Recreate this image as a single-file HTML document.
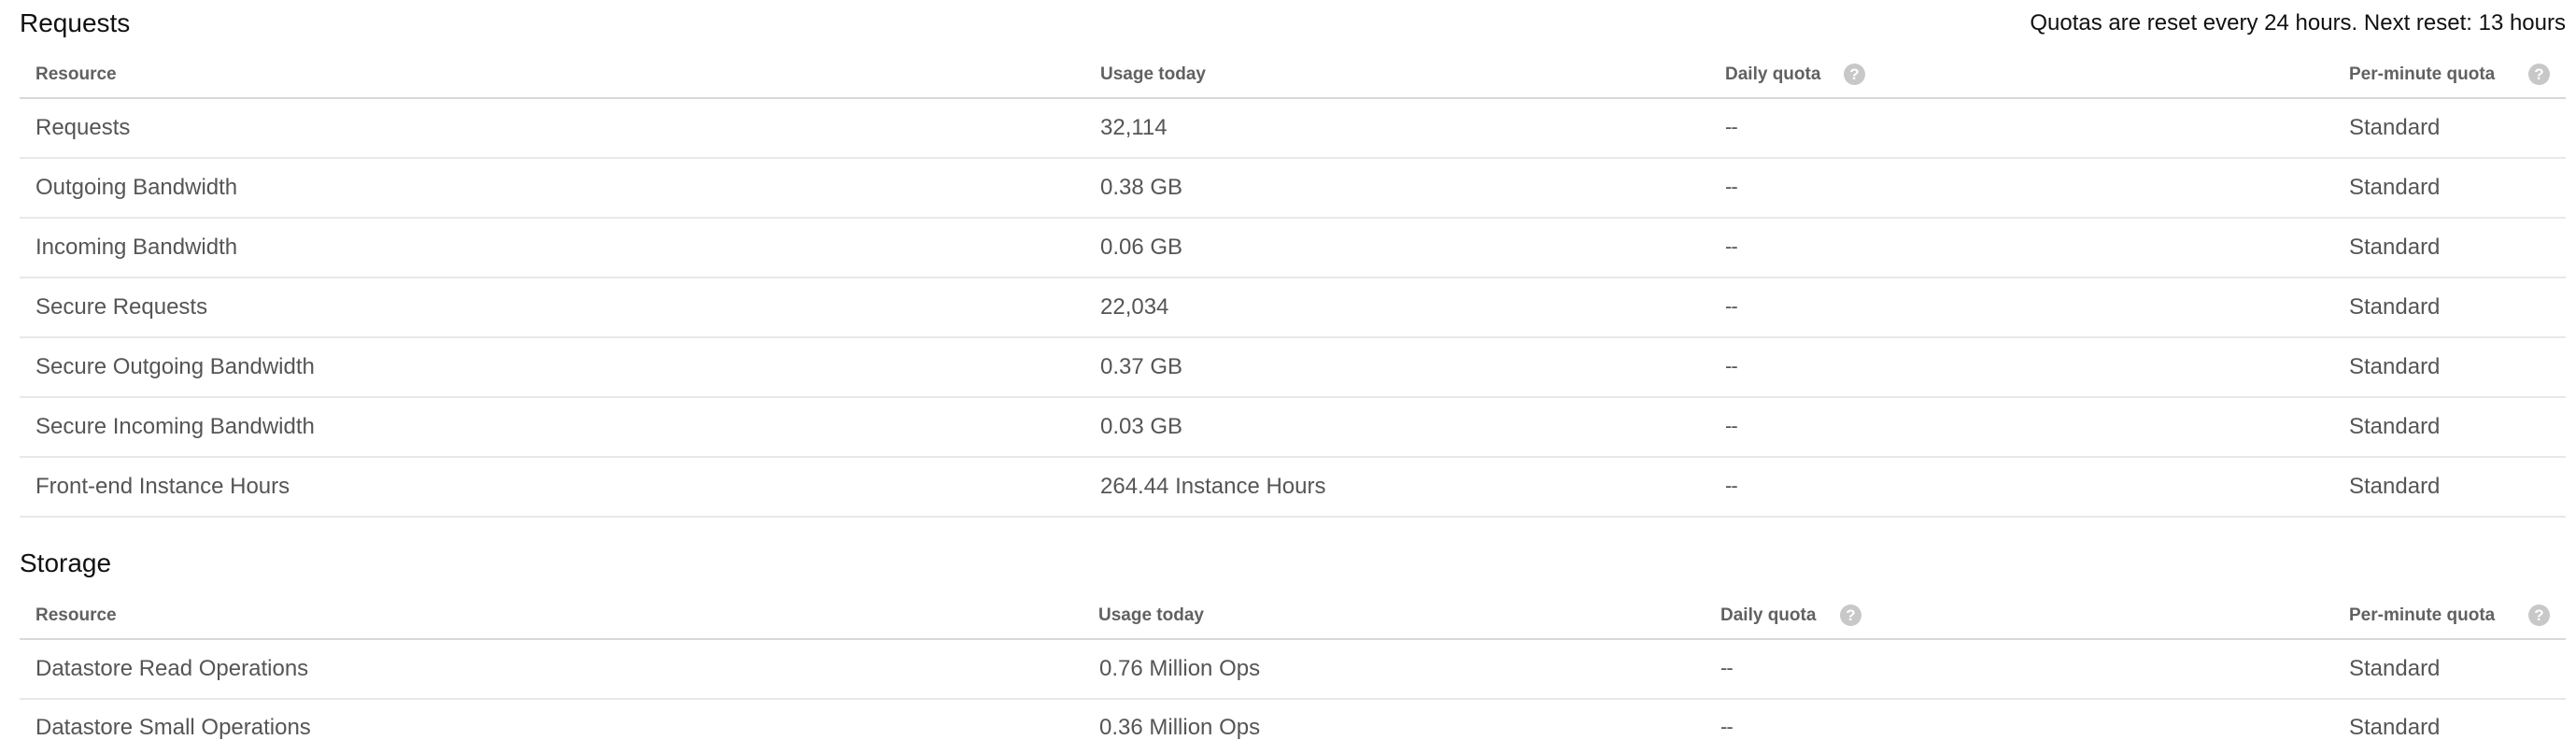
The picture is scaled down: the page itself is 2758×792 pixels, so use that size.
<!DOCTYPE html>
<html><head><meta charset="utf-8"><style>
body{margin:0;width:2758px;height:782px;background:#fff;position:relative;overflow:hidden;font-family:"Liberation Sans",sans-serif;}
.a{position:absolute;white-space:nowrap;line-height:1;}
.t{font-size:28px;color:#111;}
.h{font-size:19px;color:#616161;font-weight:bold;}
.c{font-size:24px;color:#555;}
.d{font-size:22px;color:#555;letter-spacing:-1px;}
.l{position:absolute;left:21px;width:2726px;height:2px;background:#e8e8e8;}
.lh{background:#d8d8d8;}
.q{position:absolute;width:23px;height:23px;border-radius:50%;background:#c8c8c8;color:#fff;font-size:17px;font-weight:bold;text-align:center;line-height:23px;}
</style></head><body>
<div class="a t" style="left:21px;top:11px">Requests</div>
<div class="a" style="right:11px;top:13px;font-size:24px;color:#111">Quotas are reset every 24 hours. Next reset: 13 hours</div>

<div class="a h" style="left:38px;top:70px">Resource</div>
<div class="a h" style="left:1178px;top:70px">Usage today</div>
<div class="a h" style="left:1847px;top:70px">Daily quota</div>
<div class="q" style="left:1974px;top:68px">?</div>
<div class="a h" style="left:2515px;top:70px">Per-minute quota</div>
<div class="q" style="left:2707px;top:68px">?</div>
<div class="l lh" style="top:104px"></div>

<div class="a c" style="left:38px;top:125px">Requests</div><div class="a c" style="left:1178px;top:125px">32,114</div><div class="a d" style="left:1847px;top:125px">--</div><div class="a c" style="left:2515px;top:125px">Standard</div>
<div class="l" style="top:168px"></div>
<div class="a c" style="left:38px;top:189px">Outgoing Bandwidth</div><div class="a c" style="left:1178px;top:189px">0.38 GB</div><div class="a d" style="left:1847px;top:189px">--</div><div class="a c" style="left:2515px;top:189px">Standard</div>
<div class="l" style="top:232px"></div>
<div class="a c" style="left:38px;top:253px">Incoming Bandwidth</div><div class="a c" style="left:1178px;top:253px">0.06 GB</div><div class="a d" style="left:1847px;top:253px">--</div><div class="a c" style="left:2515px;top:253px">Standard</div>
<div class="l" style="top:296px"></div>
<div class="a c" style="left:38px;top:317px">Secure Requests</div><div class="a c" style="left:1178px;top:317px">22,034</div><div class="a d" style="left:1847px;top:317px">--</div><div class="a c" style="left:2515px;top:317px">Standard</div>
<div class="l" style="top:360px"></div>
<div class="a c" style="left:38px;top:381px">Secure Outgoing Bandwidth</div><div class="a c" style="left:1178px;top:381px">0.37 GB</div><div class="a d" style="left:1847px;top:381px">--</div><div class="a c" style="left:2515px;top:381px">Standard</div>
<div class="l" style="top:424px"></div>
<div class="a c" style="left:38px;top:445px">Secure Incoming Bandwidth</div><div class="a c" style="left:1178px;top:445px">0.03 GB</div><div class="a d" style="left:1847px;top:445px">--</div><div class="a c" style="left:2515px;top:445px">Standard</div>
<div class="l" style="top:488px"></div>
<div class="a c" style="left:38px;top:509px">Front-end Instance Hours</div><div class="a c" style="left:1178px;top:509px">264.44 Instance Hours</div><div class="a d" style="left:1847px;top:509px">--</div><div class="a c" style="left:2515px;top:509px">Standard</div>
<div class="l" style="top:552px"></div>

<div class="a t" style="left:21px;top:589px">Storage</div>
<div class="a h" style="left:38px;top:649px">Resource</div>
<div class="a h" style="left:1176px;top:649px">Usage today</div>
<div class="a h" style="left:1842px;top:649px">Daily quota</div>
<div class="q" style="left:1970px;top:647px">?</div>
<div class="a h" style="left:2515px;top:649px">Per-minute quota</div>
<div class="q" style="left:2707px;top:647px">?</div>
<div class="l lh" style="top:683px"></div>
<div class="a c" style="left:38px;top:704px">Datastore Read Operations</div><div class="a c" style="left:1177px;top:704px">0.76 Million Ops</div><div class="a d" style="left:1842px;top:704px">--</div><div class="a c" style="left:2515px;top:704px">Standard</div>
<div class="l" style="top:747px"></div>
<div class="a c" style="left:38px;top:767px">Datastore Small Operations</div><div class="a c" style="left:1177px;top:767px">0.36 Million Ops</div><div class="a d" style="left:1842px;top:767px">--</div><div class="a c" style="left:2515px;top:767px">Standard</div>
</body></html>
